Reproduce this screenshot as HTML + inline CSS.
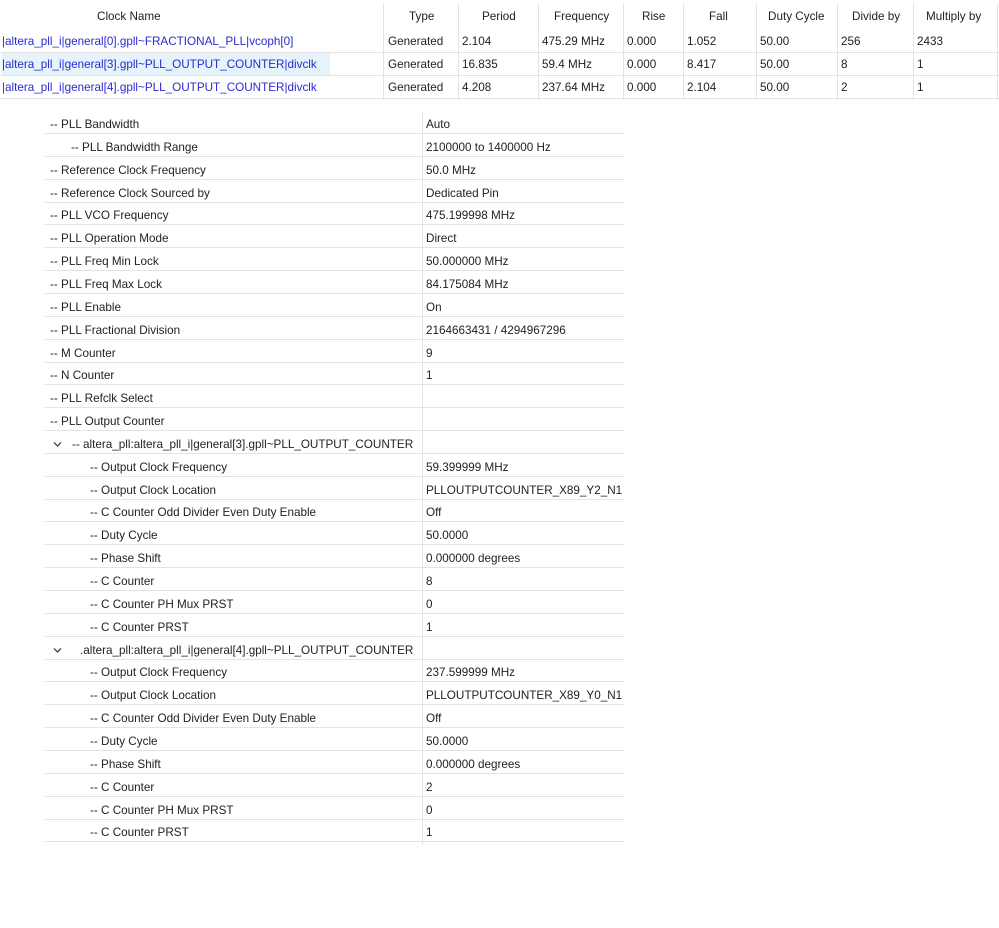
<!DOCTYPE html>
<html><head><meta charset="utf-8"><style>
*{margin:0;padding:0;box-sizing:border-box}
body{width:999px;height:928px;background:#fff;font-family:"Liberation Sans",sans-serif;font-size:11.7px;color:#222;position:relative;overflow:hidden}
.a{position:absolute;white-space:nowrap}
.v{position:absolute;width:1px;background:#e3e3e3}
.h{position:absolute;height:1px;background:#e3e3e3}
.b{color:#2a2ad0}
</style></head><body>
<div class="v" style="left:383px;top:3px;height:97px"></div>
<div class="v" style="left:458px;top:3px;height:97px"></div>
<div class="v" style="left:538px;top:3px;height:97px"></div>
<div class="v" style="left:623px;top:3px;height:97px"></div>
<div class="v" style="left:683px;top:3px;height:97px"></div>
<div class="v" style="left:756px;top:3px;height:97px"></div>
<div class="v" style="left:837px;top:3px;height:97px"></div>
<div class="v" style="left:913px;top:3px;height:97px"></div>
<div class="v" style="left:997px;top:3px;height:97px"></div>
<div class="h" style="left:0;top:52px;width:999px"></div>
<div class="h" style="left:0;top:75px;width:999px"></div>
<div class="h" style="left:0;top:98px;width:999px"></div>
<div class="a" style="left:1px;top:53px;width:329px;height:22px;background:#e5f3fb"></div>
<div class="a" style="left:97px;top:10px">Clock Name</div>
<div class="a" style="left:409px;top:10px">Type</div>
<div class="a" style="left:482px;top:10px">Period</div>
<div class="a" style="left:554px;top:10px">Frequency</div>
<div class="a" style="left:642px;top:10px">Rise</div>
<div class="a" style="left:709px;top:10px">Fall</div>
<div class="a" style="left:768px;top:10px">Duty Cycle</div>
<div class="a" style="left:852px;top:10px">Divide by</div>
<div class="a" style="left:926px;top:10px">Multiply by</div>
<div class="a b" style="left:2px;top:35px">|altera_pll_i|general[0].gpll~FRACTIONAL_PLL|vcoph[0]</div>
<div class="a b" style="left:2px;top:58px">|altera_pll_i|general[3].gpll~PLL_OUTPUT_COUNTER|divclk</div>
<div class="a b" style="left:2px;top:81px">|altera_pll_i|general[4].gpll~PLL_OUTPUT_COUNTER|divclk</div>
<div class="a" style="left:388px;top:35px">Generated</div><div class="a" style="left:462px;top:35px">2.104</div><div class="a" style="left:542px;top:35px">475.29 MHz</div><div class="a" style="left:627px;top:35px">0.000</div><div class="a" style="left:687px;top:35px">1.052</div><div class="a" style="left:760px;top:35px">50.00</div><div class="a" style="left:841px;top:35px">256</div><div class="a" style="left:917px;top:35px">2433</div>
<div class="a" style="left:388px;top:58px">Generated</div><div class="a" style="left:462px;top:58px">16.835</div><div class="a" style="left:542px;top:58px">59.4 MHz</div><div class="a" style="left:627px;top:58px">0.000</div><div class="a" style="left:687px;top:58px">8.417</div><div class="a" style="left:760px;top:58px">50.00</div><div class="a" style="left:841px;top:58px">8</div><div class="a" style="left:917px;top:58px">1</div>
<div class="a" style="left:388px;top:81px">Generated</div><div class="a" style="left:462px;top:81px">4.208</div><div class="a" style="left:542px;top:81px">237.64 MHz</div><div class="a" style="left:627px;top:81px">0.000</div><div class="a" style="left:687px;top:81px">2.104</div><div class="a" style="left:760px;top:81px">50.00</div><div class="a" style="left:841px;top:81px">2</div><div class="a" style="left:917px;top:81px">1</div>

<div class="v" style="left:422px;top:112px;height:733px"></div>
<div id="t"></div>
<script>
var rows=[
[50,"-- PLL Bandwidth","Auto"],[71,"-- PLL Bandwidth Range","2100000 to 1400000 Hz"],
[50,"-- Reference Clock Frequency","50.0 MHz"],[50,"-- Reference Clock Sourced by","Dedicated Pin"],
[50,"-- PLL VCO Frequency","475.199998 MHz"],[50,"-- PLL Operation Mode","Direct"],
[50,"-- PLL Freq Min Lock","50.000000 MHz"],[50,"-- PLL Freq Max Lock","84.175084 MHz"],
[50,"-- PLL Enable","On"],[50,"-- PLL Fractional Division","2164663431 / 4294967296"],
[50,"-- M Counter","9"],[50,"-- N Counter","1"],[50,"-- PLL Refclk Select",""],[50,"-- PLL Output Counter",""],
[72,"--  altera_pll:altera_pll_i|general[3].gpll~PLL_OUTPUT_COUNTER","",1],
[90,"-- Output Clock Frequency","59.399999 MHz"],[90,"-- Output Clock Location","PLLOUTPUTCOUNTER_X89_Y2_N1"],
[90,"-- C Counter Odd Divider Even Duty Enable","Off"],[90,"-- Duty Cycle","50.0000"],[90,"-- Phase Shift","0.000000 degrees"],
[90,"-- C Counter","8"],[90,"-- C Counter PH Mux PRST","0"],[90,"-- C Counter PRST","1"],
[80,".altera_pll:altera_pll_i|general[4].gpll~PLL_OUTPUT_COUNTER","",1],
[90,"-- Output Clock Frequency","237.599999 MHz"],[90,"-- Output Clock Location","PLLOUTPUTCOUNTER_X89_Y0_N1"],
[90,"-- C Counter Odd Divider Even Duty Enable","Off"],[90,"-- Duty Cycle","50.0000"],[90,"-- Phase Shift","0.000000 degrees"],
[90,"-- C Counter","2"],[90,"-- C Counter PH Mux PRST","0"],[90,"-- C Counter PRST","1"]];
var h="";
for(var i=0;i<rows.length;i++){var r=rows[i];var ty=118+22.85*i;
h+='<div class="a" style="left:'+r[0]+'px;top:'+ty+'px">'+r[1]+'</div>';
h+='<div class="a" style="left:426px;top:'+ty+'px">'+r[2]+'</div>';
h+='<div class="h" style="left:45px;width:579px;top:'+(133+22.85*i)+'px"></div>';
if(r[3])h+='<svg class="a" style="left:53px;top:'+(ty+3)+'px" width="9" height="7"><path d="M1 1.5L4.5 5L8 1.5" fill="none" stroke="#444" stroke-width="1.3"/></svg>';}
document.getElementById("t").innerHTML=h;
</script>
</body></html>
